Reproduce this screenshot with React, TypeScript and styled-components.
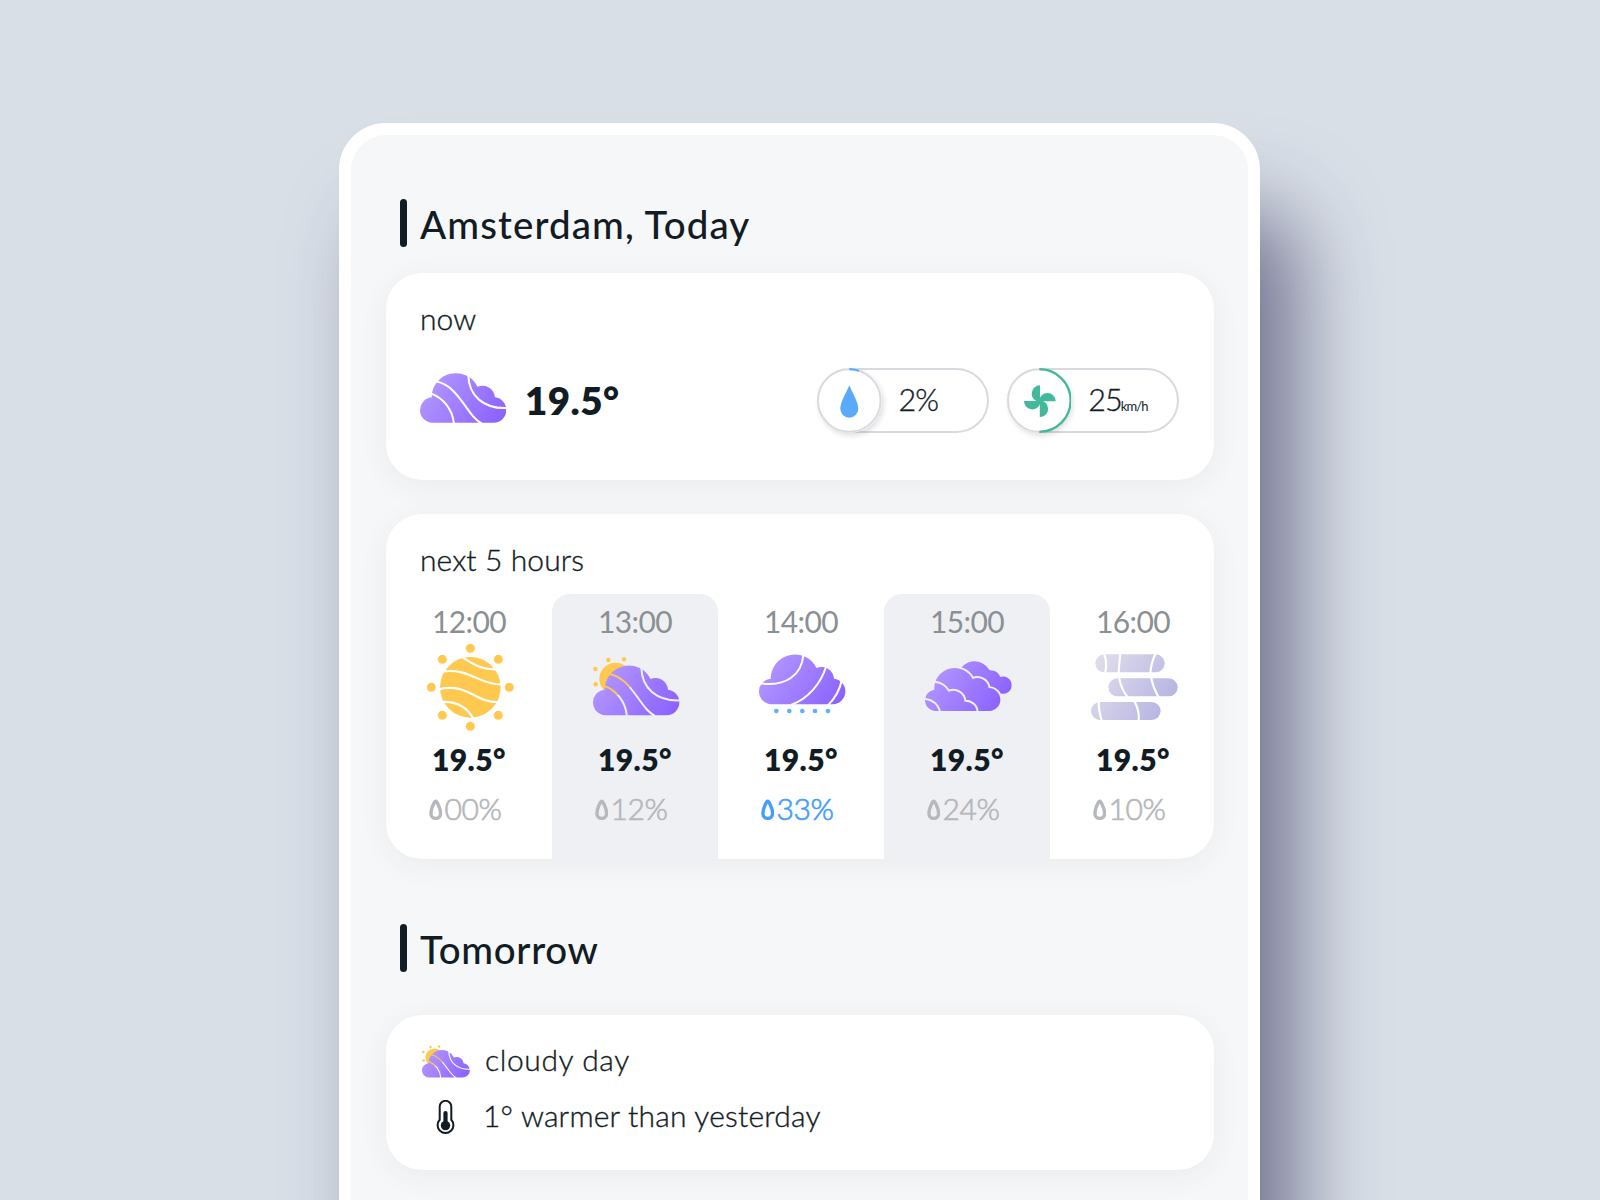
import React, { useId } from "react";
import styled, { createGlobalStyle } from "styled-components";

const ink = "#121c24";

const GlobalStyle = createGlobalStyle`
  *, *::before, *::after { box-sizing: border-box; }
  html, body { margin: 0; padding: 0; }
  body { background: #d9dfe7; overflow: hidden; }
`;

const Page = styled.div`
  height: 1200px;
  padding: 123px 0 0 339px;
  overflow: hidden;
  background: #d9dfe7;
  color: ${ink};
  font-family: Lato, "Open Sans", sans-serif;
`;

const Frame = styled.main`
  width: 921px;
  height: 1400px;
  padding: 64.4px 34.3px 0 34.7px;
  border: 12px solid #fff;
  border-radius: 47px;
  background: #f6f7f9;
  box-shadow: 37px 88px 84px rgba(47, 45, 89, 0.6);
`;

const Heading = styled.header<{ $top?: number; $bottom: number }>`
  display: flex;
  align-items: center;
  gap: 13px;
  height: 48px;
  margin: ${(p) => p.$top ?? 0}px 0 ${(p) => p.$bottom}px 14.3px;
`;

const Bar = styled.span`
  width: 7px;
  height: 48px;
  border-radius: 3.5px;
  background: ${ink};
`;

const Title = styled.h1<{ $track: number }>`
  margin: 0;
  padding-top: 2px;
  font-size: 38.5px;
  font-weight: 500;
  line-height: 48px;
  letter-spacing: ${(p) => p.$track}px;
  white-space: nowrap;
`;

const Card = styled.section<{ $height: number; $top?: number }>`
  height: ${(p) => p.$height}px;
  margin-top: ${(p) => p.$top ?? 0}px;
  padding: 26px 0 0;
  border-radius: 36px;
  overflow: hidden;
  background: #fff;
  box-shadow: 0 6px 30px rgba(40, 50, 50, 0.06);
`;

const Label = styled.h2<{ $track: number }>`
  margin: 0 0 0 34.3px;
  padding-top: 1px;
  font-size: 30px;
  font-weight: 300;
  line-height: 36px;
  letter-spacing: ${(p) => p.$track}px;
  -webkit-text-stroke: 0.35px currentColor;
`;

const NowRow = styled.div`
  display: flex;
  align-items: center;
  height: 65px;
  margin: 32px 34.8px 0 34.3px;

  > svg { margin-bottom: 4px; }
`;

const BigTemp = styled.strong`
  flex: 1;
  margin-left: 18.6px;
  font-size: 38.5px;
  font-weight: 800;
  line-height: 48px;
  letter-spacing: 0.5px;
`;

const Gauge = styled.div`
  display: flex;
  align-items: center;
  width: 172.2px;
  height: 65px;
  border-radius: 33px;
  box-shadow: inset 0 0 0 2px #d9dae0;

  & + & { margin-left: 17.6px; }
`;

const Dial = styled.span`
  width: 64.6px;
  height: 65px;
  border-radius: 50%;
  background: #fff;
  box-shadow: 2px 3px 5px rgba(40, 40, 60, 0.14);

  svg { display: block; }
`;

const Reading = styled.span`
  display: flex;
  align-items: baseline;
  height: 36px;
  margin: -3px 0 0 17px;
  font-size: 30.5px;
  font-weight: 300;
  line-height: 36px;
  letter-spacing: -1px;
  -webkit-text-stroke: 0.35px currentColor;
`;

const Unit = styled.small`
  margin-left: -1px;
  font-size: 13px;
  font-weight: 400;
  line-height: 13px;
  letter-spacing: -0.9px;
  -webkit-text-stroke: 0;
`;

const Hours = styled.div`
  display: flex;
  height: 266px;
  margin-top: 16.8px;
`;

const Hour = styled.article<{ $shaded: boolean }>`
  display: flex;
  flex: 0 0 166px;
  flex-direction: column;
  padding-top: 9px;
  border-radius: 18px 18px 0 0;
  background: ${(p) => (p.$shaded ? "#eff0f4" : "transparent")};

  > svg { display: block; margin: 4.8px 0 10.2px 41.2px; }
`;

const Time = styled.time`
  padding-left: 46.3px;
  color: #8a9093;
  font-size: 30px;
  font-weight: 400;
  line-height: 36px;
  letter-spacing: -0.6px;
`;

const Temp = styled.strong`
  padding-left: 46.3px;
  font-size: 30px;
  font-weight: 800;
  line-height: 36px;
  letter-spacing: 0.4px;
`;

const Rain = styled.span<{ $active: boolean }>`
  display: flex;
  align-items: center;
  gap: 2px;
  margin: 13.6px 0 0 43.3px;
  color: ${(p) => (p.$active ? "#449ffb" : "#b5b8bc")};
  font-size: 30px;
  font-weight: 300;
  line-height: 36px;
  letter-spacing: -0.4px;
  -webkit-text-stroke: 0.7px currentColor;

  svg { flex: none; margin-top: 3px; }
`;

const Note = styled.p<{ $track: number }>`
  display: flex;
  align-items: center;
  height: 36px;
  margin: 0 0 20px 36.3px;
  font-size: 30px;
  font-weight: 300;
  line-height: 36px;
  letter-spacing: ${(p) => p.$track}px;
  -webkit-text-stroke: 0.35px currentColor;
`;

const NoteIcon = styled.span<{ $gap: number }>`
  display: flex;
  flex: none;
  justify-content: center;
  width: 48px;
  padding-top: 5px;
  margin-right: ${(p) => p.$gap}px;
`;

const CLOUD =
  "M38 149.500A38 38 0 0 1 0 111.500A38 38 0 0 1 35 73A72.500 72.500 0 0 1 172.500 41A38 38 0 0 1 225 73A38 38 0 0 1 259 111A38 38 0 0 1 221 149.500Z";

const BREEZE = [
  "M32 61C70 75 98 108 102 154",
  "M46 25C88 32 112 66 133 95S166 142 186 152",
  "M145 6C146 68 190 108 262 105",
];

const ARCS = [
  "M6 87C80 98 128 62 133 2",
  "M201 38C186 85 150 132 96 152",
  "M249 74C243 108 228 132 206 154",
];

function CutCloud({ cuts }: { cuts: string[] }) {
  const id = useId();
  return (
    <>
      <defs>
        <linearGradient id={`${id}g`} gradientUnits="userSpaceOnUse" x1="30" y1="20" x2="235" y2="160">
          <stop offset="0" stopColor="#b296ff" />
          <stop offset="1" stopColor="#8b61ff" />
        </linearGradient>
        <mask id={`${id}m`} maskUnits="userSpaceOnUse" x="-5" y="-5" width="270" height="165">
          <rect x="-5" y="-5" width="270" height="165" fill="#fff" />
          {cuts.map((d) => (
            <path key={d} d={d} fill="none" stroke="#000" strokeWidth="6" />
          ))}
        </mask>
      </defs>
      <path d={CLOUD} fill={`url(#${id}g)`} mask={`url(#${id}m)`} />
    </>
  );
}

function CloudIcon() {
  return (
    <svg width="86.3" height="50" viewBox="0 0 259 150">
      <CutCloud cuts={BREEZE} />
    </svg>
  );
}

function SunIcon() {
  const dots = [[130, 13], [214, 46], [247, 130], [214, 214], [130, 247], [46, 214], [13, 130], [46, 46]];
  return (
    <svg width="86.67" height="86.67" viewBox="0 0 260 260">
      <g fill="#ffc84f">
        <circle cx="130" cy="130" r="91" />
        {dots.map(([x, y]) => (
          <circle key={`${x}-${y}`} cx={x} cy={y} r="13.500" />
        ))}
      </g>
      <g fill="none" stroke="#fff" strokeWidth="6.500">
        <path d="M107 40C138 60 160 76 210 76" />
        <path d="M48 82C130 73 150 120 225 122" />
        <path d="M34 136C125 115 145 178 216 174" />
        <path d="M46 174C95 172 122 192 140 226" />
      </g>
    </svg>
  );
}

function SunCloudArt() {
  return (
    <>
      <g fill="#ffc84f">
        <circle cx="68" cy="41" r="49" />
        <circle cx="46" cy="-16" r="6.800" />
        <circle cx="93" cy="-18" r="6.800" />
        <circle cx="7" cy="11" r="6.800" />
        <circle cx="8" cy="57" r="6.800" />
      </g>
      <CutCloud cuts={BREEZE} />
    </>
  );
}

function SunCloudIcon() {
  return (
    <svg width="86.67" height="86.67" viewBox="0 -64 260 260">
      <SunCloudArt />
    </svg>
  );
}

function SmallSunCloudIcon() {
  return (
    <svg width="48" height="32.8" viewBox="0 -26 260 177">
      <SunCloudArt />
    </svg>
  );
}

function DrizzleIcon() {
  return (
    <svg width="86.67" height="86.67" viewBox="0 -31 260 260">
      <CutCloud cuts={ARCS} />
      <g fill="#5fb0ff">
        {[52, 91, 130, 168, 207].map((x) => (
          <circle key={x} cx={x} cy="170" r="7" />
        ))}
      </g>
    </svg>
  );
}

function CloudsIcon() {
  const id = useId();
  const front =
    "M32 201A32 32 0 0 1 0 169A32 32 0 0 1 28 137A61 61 0 0 1 143 105A34 34 0 0 1 191 132A35 35 0 0 1 226 167A34 34 0 0 1 193 201Z";
  return (
    <svg width="86.67" height="86.67" viewBox="0 0 260 260">
      <defs>
        <linearGradient id={`${id}g`} gradientUnits="userSpaceOnUse" x1="30" y1="70" x2="225" y2="200">
          <stop offset="0" stopColor="#b296ff" />
          <stop offset="1" stopColor="#8b61ff" />
        </linearGradient>
        <mask id={`${id}b`} maskUnits="userSpaceOnUse" x="0" y="0" width="260" height="260">
          <rect width="260" height="260" fill="#fff" />
          <path d={front} fill="#000" stroke="#000" strokeWidth="11" />
        </mask>
        <mask id={`${id}f`} maskUnits="userSpaceOnUse" x="0" y="0" width="260" height="260">
          <rect width="260" height="260" fill="#fff" />
          <g fill="none" stroke="#000" strokeWidth="6">
            <path d="M30 113Q58 116 72 140A36 36 0 0 1 121 170A36 36 0 0 1 158 204" />
            <path d="M-3 164Q36 168 46 204" />
          </g>
        </mask>
      </defs>
      <path
        d="M100 85A52 52 0 0 1 194 79A32 32 0 0 1 226 99A26 26 0 1 1 229 149L191 150L140 120Z"
        fill={`url(#${id}g)`}
        mask={`url(#${id}b)`}
      />
      <path d={front} fill={`url(#${id}g)`} mask={`url(#${id}f)`} />
    </svg>
  );
}

function FogIcon() {
  const id = useId();
  return (
    <svg width="86.67" height="86.67" viewBox="0 0 260 260">
      <defs>
        <linearGradient id={id} gradientUnits="userSpaceOnUse" x1="20" y1="60" x2="225" y2="190">
          <stop offset="0" stopColor="#dedcea" />
          <stop offset="1" stopColor="#b8b5e4" />
        </linearGradient>
      </defs>
      <g fill={`url(#${id})`}>
        <rect x="13" y="31" width="208" height="54" rx="27" />
        <rect x="52" y="103" width="208" height="54" rx="27" />
        <rect x="0" y="174" width="209" height="54" rx="27" />
      </g>
      <g fill="none" stroke="#fff" strokeWidth="6.500">
        <path d="M39 28Q50 58 42 88M88 28Q84 58 83 88M194 28Q180 58 178 88" />
        <path d="M84 100Q91 138 111 160M180 100Q187 133 203 160" />
        <path d="M23 171Q23 205 33 231M130 171Q146 200 143 231" />
      </g>
    </svg>
  );
}

function DropOutline() {
  return (
    <svg width="13.500" height="22" viewBox="0 0 13.5 22">
      <path
        d="M6.700 2.300C5.400 2.300 1.900 9.800 1.900 14.200C1.900 17.500 3.900 19.400 6.700 19.400S11.600 17.500 11.600 14.200C11.600 9.800 8 2.300 6.700 2.300Z"
        fill="none"
        stroke="currentColor"
        strokeWidth="3.400"
      />
    </svg>
  );
}

function HumidityDial() {
  return (
    <svg width="64.600" height="65" viewBox="0 0 64.6 65">
      <circle cx="32.300" cy="32.500" r="31.300" fill="none" stroke="#d9dae0" strokeWidth="2" />
      <path d="M32.300 1.200A31.300 31.300 0 0 1 42 2.700" fill="none" stroke="#5aaafc" strokeWidth="2.200" />
      <path d="M32.300 17.200C34.800 23.700 41.300 33.700 41.300 40.700A9 9 0 0 1 23.300 40.700C23.300 33.700 29.800 23.700 32.300 17.200Z" fill="#5aaafc" />
    </svg>
  );
}

function WindDial() {
  return (
    <svg width="64.600" height="65" viewBox="0 0 64.6 65">
      <circle cx="32.300" cy="32.500" r="31.300" fill="none" stroke="#d9dae0" strokeWidth="2" />
      <path d="M32.300 1.200A31.300 31.300 0 0 1 32.300 63.800" fill="none" stroke="#43b99c" strokeWidth="2.200" />
      <g fill="#43b99c">
        {[0, 90, 180, 270].map((turn) => (
          <path key={turn} d="M33 34V17.300A8.350 8.350 0 0 0 33 34Z" transform={`rotate(${turn} 32.9 33.2)`} />
        ))}
      </g>
    </svg>
  );
}

function Thermometer() {
  return (
    <svg width="19" height="35" viewBox="0 0 19 35">
      <path
        d="M3.700 6.600A5.800 5.800 0 0 1 15.300 6.600V19.800A7.900 7.900 0 1 1 3.700 19.800Z"
        fill="none"
        stroke={ink}
        strokeWidth="2"
      />
      <path d="M9.500 13V25" stroke={ink} strokeWidth="4.200" strokeLinecap="round" />
      <circle cx="9.500" cy="25.600" r="4.700" fill={ink} />
    </svg>
  );
}

const hours = [
  { time: "12:00", rain: "00%", Icon: SunIcon },
  { time: "13:00", rain: "12%", Icon: SunCloudIcon },
  { time: "14:00", rain: "33%", Icon: DrizzleIcon, wet: true },
  { time: "15:00", rain: "24%", Icon: CloudsIcon },
  { time: "16:00", rain: "10%", Icon: FogIcon },
];

export default function App() {
  return (
    <Page>
      <GlobalStyle />
      <Frame>
        <Heading $bottom={25.6}>
          <Bar />
          <Title $track={1.1}>Amsterdam, Today</Title>
        </Heading>
        <Card $height={207}>
          <Label $track={0.1}>now</Label>
          <NowRow>
            <CloudIcon />
            <BigTemp>19.5°</BigTemp>
            <Gauge>
              <Dial><HumidityDial /></Dial>
              <Reading>2%</Reading>
            </Gauge>
            <Gauge>
              <Dial><WindDial /></Dial>
              <Reading>25<Unit>km/h</Unit></Reading>
            </Gauge>
          </NowRow>
        </Card>
        <Card $height={344.8} $top={34.4}>
          <Label $track={0.1}>next 5 hours</Label>
          <Hours>
            {hours.map(({ time, rain, Icon, wet }, i) => (
              <Hour key={time} $shaded={i % 2 === 1}>
                <Time>{time}</Time>
                <Icon />
                <Temp>19.5°</Temp>
                <Rain $active={!!wet}><DropOutline />{rain}</Rain>
              </Hour>
            ))}
          </Hours>
        </Card>
        <Heading $top={64.8} $bottom={43}>
          <Bar />
          <Title $track={0.65}>Tomorrow</Title>
        </Heading>
        <Card $height={155}>
          <Note $track={0.6}><NoteIcon $gap={15}><SmallSunCloudIcon /></NoteIcon>cloudy day</Note>
          <Note $track={0.2}><NoteIcon $gap={13}><Thermometer /></NoteIcon>1° warmer than yesterday</Note>
        </Card>
      </Frame>
    </Page>
  );
}
